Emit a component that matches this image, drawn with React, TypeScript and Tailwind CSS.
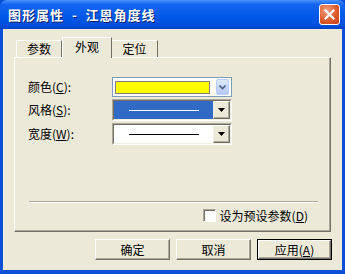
const font = { fontFamily: '"Noto Sans CJK SC", "Noto Sans", sans-serif' };

function ClassicArrow() {
  return (
    <div className="flex h-full w-[17px] items-center justify-center border border-t-white border-l-[#f1efe2] border-r-[#716f64] border-b-[#716f64] bg-[#ece9d8] shadow-[inset_-1px_-1px_0_#aca899]">
      <svg width="7" height="4" viewBox="0 0 7 4">
        <path d="M0 0h7L3.5 4z" fill="#000" />
      </svg>
    </div>
  );
}

function LineCombo({ selected }: { selected?: boolean }) {
  return (
    <div className="flex h-[22px] w-[120px] border border-t-[#aca899] border-l-[#aca899] border-r-white border-b-white">
      <div className="flex flex-1 border border-t-[#716f64] border-l-[#716f64] border-r-[#f1efe2] border-b-[#f1efe2] bg-white">
        <div className={`flex flex-1 items-center justify-center ${selected ? "bg-[#316ac5]" : "bg-white"}`}>
          <div className={`h-px w-[70px] ${selected ? "bg-white" : "bg-black"}`} />
        </div>
        <ClassicArrow />
      </div>
    </div>
  );
}

function ColorCombo() {
  return (
    <div className="flex h-[20px] w-[120px] items-center gap-[6px] border border-[#7f9db9] bg-white px-[2px]">
      <div className="h-[13px] w-[99px] border border-[#808080] bg-[#ffff00]" />
      <div className="ml-auto flex h-[16px] w-[13px] items-center justify-center rounded-[2px] border border-[#b9cdf6] bg-[linear-gradient(to_bottom,#dfe9fd,#b4c8f6)]">
        <svg width="7" height="5" viewBox="0 0 7 5">
          <path d="M0.5 0.5L3.5 3.5L6.5 0.5" stroke="#4d6185" strokeWidth="1.6" fill="none" />
        </svg>
      </div>
    </div>
  );
}

function Btn({ children, focus }: { children: React.ReactNode; focus?: boolean }) {
  return (
    <div className={`h-[21px] w-[75px] ${focus ? "border border-black" : ""}`}>
      <div className="flex h-full w-full items-center justify-center border border-t-white border-l-white border-r-[#716f64] border-b-[#716f64] bg-[#ece9d8] text-[12px] leading-none text-black shadow-[inset_-1px_-1px_0_#aca899]">
        {children}
      </div>
    </div>
  );
}

export default function App() {
  return (
    <div className="flex h-[274px] w-[345px] flex-col bg-[#0a4fd8]" style={font}>
      {/* title bar */}
      <div className="flex h-[29px] shrink-0 items-center rounded-t-[7px] bg-[linear-gradient(to_bottom,#4a94fa,#1565f2_15%,#0058e8_60%,#004ddc_90%,#0040c4)] pl-[8px] pr-[5px]">
        <span className="whitespace-pre text-[13px] font-bold tracking-[1px] text-white [text-shadow:1px_1px_0_#0a1f6e]">
          图形属性  -  江恩角度线
        </span>
        <div className="ml-auto flex h-[21px] w-[21px] items-center justify-center rounded-[3px] border border-white bg-[radial-gradient(circle_at_35%_30%,#f0a080,#e05a2c_55%,#c4401a)]">
          <svg width="11" height="11" viewBox="0 0 11 11">
            <path d="M1.5 1.5L9.5 9.5M9.5 1.5L1.5 9.5" stroke="#fff" strokeWidth="2.2" strokeLinecap="square" />
          </svg>
        </div>
      </div>

      {/* body */}
      <div className="mx-[3px] mb-[4px] flex flex-1 flex-col bg-[#ece9d8] px-[11px] pt-[8px] text-[12px] text-black">
        {/* tabs */}
        <div className="flex h-[20px] items-end pl-[2px]">
          <div className="flex h-[17px] w-[46px] items-center justify-center border-l border-t border-r border-l-white border-t-white border-r-[#716f64] leading-none">
            参数
          </div>
          <div className="relative z-10 -mb-px flex h-[21px] w-[50px] items-start justify-center border-l border-t border-r border-l-white border-t-white border-r-[#716f64] bg-[#ece9d8] pt-[3px] leading-none">
            外观
          </div>
          <div className="flex h-[17px] w-[46px] items-center justify-center border-t border-r border-t-white border-r-[#716f64] leading-none">
            定位
          </div>
        </div>

        {/* panel */}
        <div className="flex h-[175px] flex-col border border-t-white border-l-white border-r-[#716f64] border-b-[#716f64] shadow-[inset_-1px_-1px_0_#aca899] pl-[13px] pt-[19px]">
          <div className="grid grid-cols-[84px_120px] items-center gap-y-[2px]">
            <span className="leading-none">颜色(<u>C</u>):</span>
            <ColorCombo />
            <span className="leading-none">风格(<u>S</u>):</span>
            <LineCombo selected />
            <span className="leading-none">宽度(<u>W</u>):</span>
            <LineCombo />
          </div>

          <div className="mt-[56px] mr-[12px] ml-[1px] h-[2px] border-t border-b border-t-[#aca899] border-b-white" />

          <div className="mt-[6px] flex items-center justify-end pr-[22px]">
            <div className="h-[13px] w-[13px] border border-t-[#aca899] border-l-[#aca899] border-r-white border-b-white bg-white shadow-[inset_1px_1px_0_#716f64]" />
            <span className="ml-[4px] leading-none">
              设为预设参数(<u>D</u>)
            </span>
          </div>
        </div>

        {/* buttons */}
        <div className="mt-[7px] mr-[-1px] flex justify-end gap-[6px]">
          <Btn>确定</Btn>
          <Btn>取消</Btn>
          <Btn focus>
            应用(<u>A</u>)
          </Btn>
        </div>
      </div>
    </div>
  );
}
